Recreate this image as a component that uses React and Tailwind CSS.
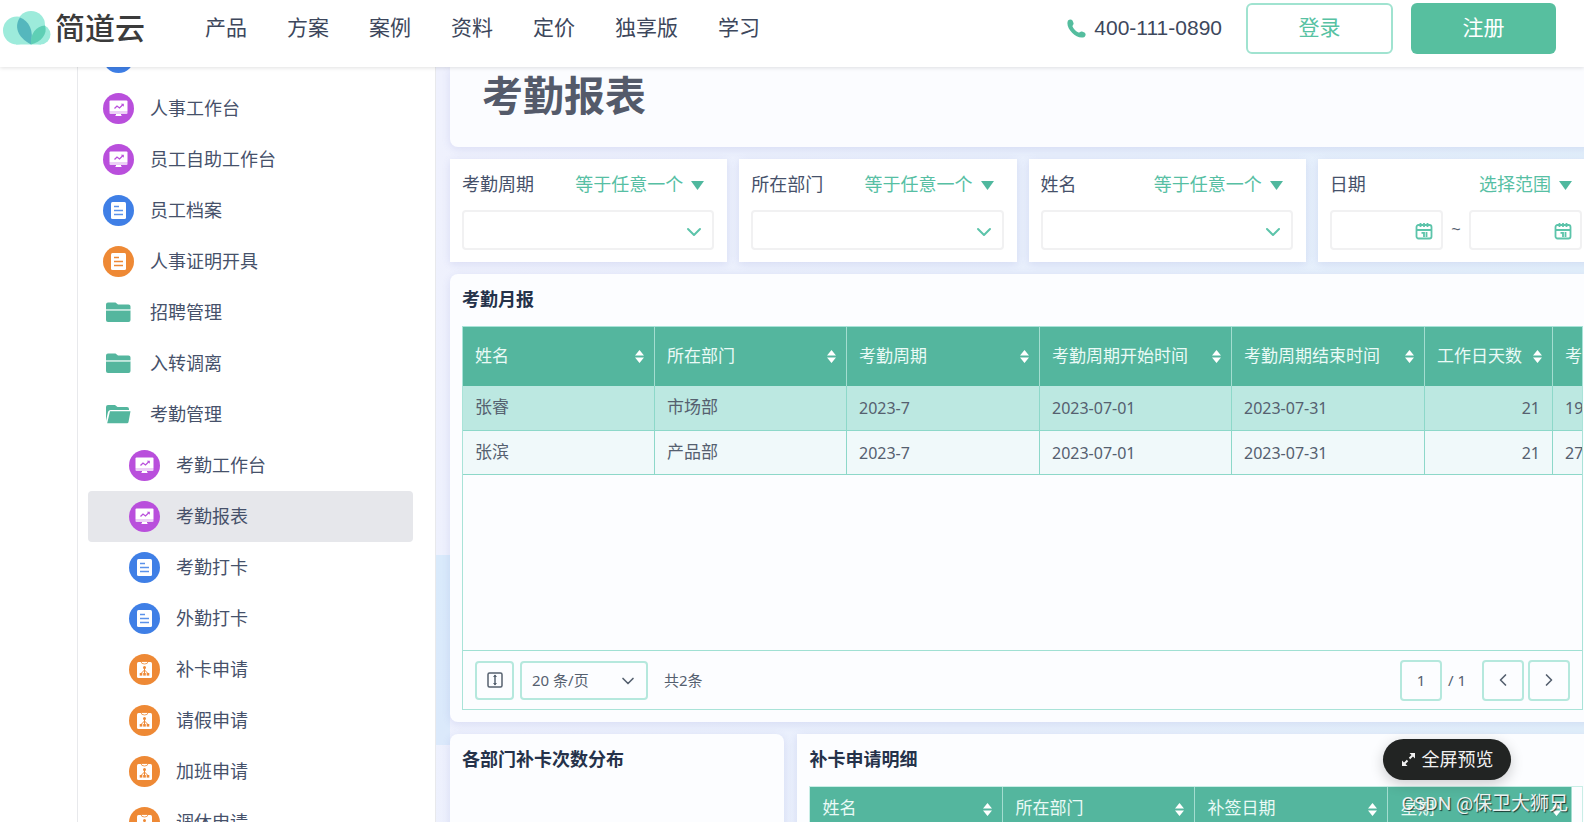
import React, { useState } from 'react';
import { ChevronDown, ChevronLeft, ChevronRight } from 'lucide-react';

// --- data ---
const NAV = ['产品', '方案', '案例', '资料', '定价', '独享版', '学习'];

const MENU = [
  { id: 0, name: '', icon: 'form', color: 'blue' },
  { id: 1, name: '人事工作台', icon: 'board', color: 'purple' },
  { id: 2, name: '员工自助工作台', icon: 'board', color: 'purple' },
  { id: 3, name: '员工档案', icon: 'form', color: 'blue' },
  { id: 4, name: '人事证明开具', icon: 'form', color: 'orange' },
  { id: 5, name: '招聘管理', icon: 'folder' },
  { id: 6, name: '入转调离', icon: 'folder' },
  { id: 7, name: '考勤管理', icon: 'folderOpen' },
  { id: 8, name: '考勤工作台', icon: 'board', color: 'purple', child: true },
  { id: 9, name: '考勤报表', icon: 'board', color: 'purple', child: true },
  { id: 10, name: '考勤打卡', icon: 'form', color: 'blue', child: true },
  { id: 11, name: '外勤打卡', icon: 'form', color: 'blue', child: true },
  { id: 12, name: '补卡申请', icon: 'flow', color: 'orange', child: true },
  { id: 13, name: '请假申请', icon: 'flow', color: 'orange', child: true },
  { id: 14, name: '加班申请', icon: 'flow', color: 'orange', child: true },
  { id: 15, name: '调休申请', icon: 'flow', color: 'orange', child: true },
];

const COLORS = {
  blue: 'bg-[#3f7fe6]',
  purple: 'bg-[#b94fdc]',
  orange: 'bg-[#ee8935]',
};

const MONTH_COLS = ['姓名', '所在部门', '考勤周期', '考勤周期开始时间', '考勤周期结束时间', '工作日天数', '考勤天数'];
const MONTH_ROWS = [
  ['张睿', '市场部', '2023-7', '2023-07-01', '2023-07-31', '21', '19'],
  ['张滨', '产品部', '2023-7', '2023-07-01', '2023-07-31', '21', '27'],
];
const DETAIL_COLS = ['姓名', '所在部门', '补签日期', '星期'];

// --- icons ---
const Logo = () => (
  <svg width="48" height="34" viewBox="0 0 48 34" aria-hidden="true">
    <g fill="#9debdb">
      <circle cx="14" cy="19.500" r="14" />
      <circle cx="28" cy="14" r="14" />
      <circle cx="37.500" cy="23.500" r="10" />
      <rect x="13" y="17" width="25" height="16.500" />
    </g>
    <path d="M28 33.500C14 26 11 15 17 6.500C26 10 31 19 28 33.500Z" fill="#55b7bd" />
    <path d="M28 33.500C27 23 33 15 42 14.500C45 23 38 31 28 33.500Z" fill="#5fcfb5" />
  </svg>
);

const BoardIcon = () => (
  <svg width="31" height="31" viewBox="0 0 31 31" aria-hidden="true">
    <path d="M7.500 7.500h16a1 1 0 0 1 1 1V18H6.500V8.500a1 1 0 0 1 1-1Z" fill="#fff" />
    <path d="M6.500 18h18v2a1 1 0 0 1-1 1h-16a1 1 0 0 1-1-1Z" fill="#ecd0f6" />
    <path d="M13 21h5v1.500h1V23h-7v-.5h1Z" fill="#fff" />
    <path d="m11.500 15.500 2.500-2.500 2.500 2 3.500-3.500" fill="none" stroke="#b94fdc" strokeWidth="1.3" />
    <path d="M17.800 10.800h3v3Z" fill="#b94fdc" />
  </svg>
);

const FormIcon = ({ color }) => (
  <svg width="31" height="31" viewBox="0 0 31 31" aria-hidden="true">
    <rect x="8" y="7" width="15" height="17" rx="1.500" fill="#fff" />
    <path d="M11 11.500h5M11 15.500h9M11 19.500h9" fill="none" stroke={color === 'blue' ? '#5b92ea' : '#ee8935'} strokeWidth="1.500" />
  </svg>
);

const FlowIcon = () => (
  <svg width="31" height="31" viewBox="0 0 31 31" aria-hidden="true">
    <rect x="8" y="8" width="15" height="16" rx="1.500" fill="#fff" />
    <path d="M12 7.500h7a3.500 2.500 0 0 1-7 0Z" fill="#fff" stroke="#ee8935" strokeWidth=".8" />
    <path d="M15.500 14v3M11.500 20l4-4 4 4M15.500 17v3" fill="none" stroke="#ee8935" strokeWidth="1" />
    <g fill="#ee8935">
      <circle cx="15.500" cy="13.500" r="1.500" />
      <rect x="10.700" y="19" width="2.600" height="2.600" />
      <rect x="14.200" y="19" width="2.600" height="2.600" />
      <rect x="17.700" y="19" width="2.600" height="2.600" />
    </g>
  </svg>
);

const FolderIcon = ({ open }) => (
  <svg width="31" height="31" viewBox="0 0 31 31" aria-hidden="true">
    {open ? (
      <g fill="#54b69e">
        <path d="M3 22V8a2 2 0 0 1 2-2h7l2.500 2H24a2 2 0 0 1 2 2v1H8a3 3 0 0 0-3 2Z" />
        <path d="M7 12.300h20.500L25.500 23a1.500 1.500 0 0 1-1.500 1.200H4.200Z" />
      </g>
    ) : (
      <g fill="#54b69e">
        <path d="M3 12V7.500a2 2 0 0 1 2-2h7.500L15 7.500h10.500a2 2 0 0 1 2 2V12Z" />
        <path d="M3 13.500h24.500V23a2 2 0 0 1-2 2H5a2 2 0 0 1-2-2Z" />
        <path d="M3 12h24.500v1.500H3Z" fill="#bfe6dc" />
      </g>
    )}
  </svg>
);

const CalendarIcon = () => (
  <svg width="18" height="18" viewBox="0 0 18 18" fill="none" stroke="#5cc4aa" strokeWidth="1.800" aria-hidden="true">
    <rect x="1.500" y="3" width="15" height="13.500" rx="2" />
    <path d="M1.500 8h15M5.500 1v4M9 1v4M12.500 1v4M6.500 10.800H9V15M11.500 10v5" />
  </svg>
);

const Caret = () => (
  <svg width="13" height="9" viewBox="0 0 13 9" fill="#4fb89e" aria-hidden="true">
    <path d="M0 0h13L6.500 9Z" />
  </svg>
);

const SortIcon = () => (
  <svg width="9" height="13" viewBox="0 0 9 13" fill="#fff" className="shrink-0" aria-hidden="true">
    <path d="M4.500 0 9 5.500H0ZM4.500 13 0 7.500h9Z" />
  </svg>
);

const MenuIcon = ({ item }) => {
  if (item.icon === 'folder') return <FolderIcon />;
  if (item.icon === 'folderOpen') return <FolderIcon open />;
  return (
    <span className={`size-[31px] shrink-0 rounded-full ${COLORS[item.color]}`}>
      {item.icon === 'board' && <BoardIcon />}
      {item.icon === 'form' && <FormIcon color={item.color} />}
      {item.icon === 'flow' && <FlowIcon />}
    </span>
  );
};

// --- header ---
const Header = () => (
  <header className="relative z-20 flex h-[67px] shrink-0 items-start bg-white pr-7 shadow-[0_1px_4px_rgba(0,0,0,0.12)]">
    <a href="#home" className="flex h-14 shrink-0 items-center gap-1 pl-[3px] text-[30px] font-bold text-[#3b3b3b]">
      <Logo />
      <span className="font-medium">简道云</span>
    </a>
    <nav className="ml-[60px] flex h-14 items-center gap-10 text-[21px] text-[#3d475c]">
      {NAV.map((n) => (
        <a key={n} href="#nav" className="whitespace-nowrap">{n}</a>
      ))}
    </nav>
    <div className="ml-auto flex h-14 items-center whitespace-nowrap">
      <a href="tel:4001110890" className="mr-6 flex items-center gap-2 text-[21px] text-[#3d475c]">
        <svg width="19" height="19" viewBox="0 0 19 19" fill="#54bd9e" aria-hidden="true">
          <path d="M1 1.500C2.500 0 4.500 0 5.500 1.500L6.500 4C7 5.500 5.500 6 5.500 7.500C6.500 10 9 12.500 11.500 13.500C13 13.500 13.500 12 15 12.500L17.500 13.500C19 14.500 19 16.500 17.500 18C10 21.500-2.500 9 1 1.500Z" />
        </svg>
        400-111-0890
      </a>
      <button className="h-[51px] w-[147px] rounded-md border-2 border-[#a0e3d0] text-[21px] text-[#57c2a3]">登录</button>
      <button className="ml-[18px] h-[51px] w-[145px] rounded-md bg-[#57bf9f] text-[21px] text-white">注册</button>
    </div>
  </header>
);

// --- sidebar ---
const Sidebar = ({ active, onSelect }) => (
  <aside className="ml-[77px] w-[359px] shrink-0 border-x border-[#e8e9ec] bg-white">
    <ul className="-mt-[35px] pl-2.5 pr-[22px]">
      {MENU.map((item) => (
        <li key={item.id}>
          <button
            onClick={() => onSelect(item.id)}
            className={`flex h-[51px] w-full items-center gap-4 rounded text-lg text-[#46516a] ${item.child ? 'pl-[41px]' : 'pl-[15px]'} ${active === item.id ? 'bg-[#e6e7eb]' : ''}`}
          >
            <MenuIcon item={item} />
            {item.name}
          </button>
        </li>
      ))}
    </ul>
  </aside>
);

// --- filters ---
const FilterCard = ({ id, label, mode, children }) => (
  <div className="bg-white py-3 pl-3 pr-[13px] shadow-[0_2px_8px_rgba(90,100,190,0.14)]">
    <div className="flex h-7 items-center justify-between pr-2.5 text-lg">
      <label htmlFor={id} className="text-[#46516a]">{label}</label>
      <button className="flex items-center gap-2 text-[#57bfa4]">
        {mode}
        <Caret />
      </button>
    </div>
    <div className="mt-[11px] flex items-center">{children}</div>
  </div>
);

const SelectFilter = ({ id, label }) => (
  <FilterCard id={id} label={label} mode="等于任意一个">
    <div className="relative w-full">
      <select id={id} className="block h-10 w-full appearance-none rounded border-2 border-[#f1f1f2] bg-white px-3">
        <option value=""></option>
      </select>
      <ChevronDown size={24} strokeWidth={2} className="pointer-events-none absolute right-2 top-2.5 text-[#5cc4aa]" />
    </div>
  </FilterCard>
);

const DateInput = ({ id, label }) => (
  <div className="relative min-w-0 flex-1">
    <input id={id} aria-label={label} type="text" className="block h-10 w-full rounded border-2 border-[#f1f1f2] bg-white px-2" />
    <span className="pointer-events-none absolute right-2.5 top-3"><CalendarIcon /></span>
  </div>
);

// --- tables ---
const HeadCell = ({ children }) => (
  <th className="border-r border-[#a3ddd0] bg-[#54b69e] pl-3 pr-2.5 text-left font-normal">
    <div className="flex items-center justify-between whitespace-nowrap text-[17px] text-[#eafaf6]">
      {children}
      <SortIcon />
    </div>
  </th>
);

const MonthReport = () => (
  <section className="flex h-[448px] flex-col rounded-lg bg-[#fcfdff] px-3 pb-3 shadow-[0_2px_8px_rgba(90,100,190,0.14)]">
    <h2 className="flex h-[52px] items-center text-lg font-bold text-[#25324a]">考勤月报</h2>
    <div className="flex min-h-0 flex-1 flex-col border border-[#a9e3d8]">
      <div className="flex-1 overflow-hidden">
        <table className="w-[1282px] table-fixed border-separate border-spacing-0">
          <colgroup>
            <col className="w-48" />
            <col className="w-48" />
            <col className="w-[193px]" />
            <col className="w-48" />
            <col className="w-[193px]" />
            <col className="w-32" />
            <col className="w-48" />
          </colgroup>
          <thead>
            <tr className="h-[59px]">
              {MONTH_COLS.map((c) => (
                <HeadCell key={c}>{c}</HeadCell>
              ))}
            </tr>
          </thead>
          <tbody>
            {MONTH_ROWS.map((row, r) => (
              <tr key={row[0]} className={r === 0 ? 'h-[45px] bg-[#bce8e1]' : 'h-11 bg-[#f0f9fa]'}>
                {row.map((v, i) => (
                  <td
                    key={i}
                    className={`border-b border-r border-[#8dd8c9] px-3 text-[#55606f] ${i < 2 ? 'text-[17px]' : 'font-["Noto_Sans",sans-serif] text-base'} ${i === 5 ? 'text-right' : ''}`}
                  >
                    {v}
                  </td>
                ))}
              </tr>
            ))}
          </tbody>
        </table>
      </div>
      <div className='flex h-[59px] items-center border-t border-[#a0e0d3] px-3 font-["Noto_Sans","Noto_Sans_CJK_SC",sans-serif] text-[15px] text-[#55606f]'>
        <button aria-label="行高" className="flex h-[39px] w-[39px] items-center justify-center rounded border-2 border-[#b5e8dd]">
          <svg width="16" height="16" viewBox="0 0 16 16" fill="none" stroke="#55606f" strokeWidth="1.500" aria-hidden="true">
            <rect x="1" y="1" width="14" height="14" rx="1.500" />
            <path d="M8 3v10" />
            <path d="m6 5 2-2.500L10 5ZM6 11l2 2.500L10 11Z" fill="#55606f" stroke="none" />
          </svg>
        </button>
        <div className="relative ml-1.5">
          <select aria-label="每页条数" className="block h-[39px] w-32 appearance-none rounded border-2 border-[#b5e8dd] bg-transparent pl-2.5">
            <option>20 条/页</option>
          </select>
          <ChevronDown size={20} className="pointer-events-none absolute right-2.5 top-2.5" />
        </div>
        <span className="ml-4">共2条</span>
        <div className="ml-auto flex items-center">
          <input aria-label="页码" defaultValue="1" className="h-[41px] w-[42px] rounded border-2 border-[#b5e8dd] text-center" />
          <span className="ml-1.5 mr-4 whitespace-nowrap">/ 1</span>
          <button aria-label="上一页" className="flex h-[41px] w-[42px] items-center justify-center rounded border-2 border-[#b5e8dd]">
            <ChevronLeft size={20} />
          </button>
          <button aria-label="下一页" className="ml-1 flex h-[41px] w-[42px] items-center justify-center rounded border-2 border-[#b5e8dd]">
            <ChevronRight size={20} />
          </button>
        </div>
      </div>
    </div>
  </section>
);

const DetailReport = () => (
  <section className="min-w-0 bg-[#fcfdff] px-3 shadow-[0_2px_8px_rgba(90,100,190,0.14)]">
    <h2 className="flex h-[52px] items-center text-lg font-bold text-[#25324a]">补卡申请明细</h2>
    <div className="h-40 overflow-hidden border border-[#c9eee6] pr-2.5">
      <table className="w-full table-fixed border-separate border-spacing-0">
        <colgroup>
          <col className="w-[193px]" />
          <col className="w-48" />
          <col className="w-[193px]" />
          <col />
        </colgroup>
        <thead>
          <tr className="h-11">
            {DETAIL_COLS.map((c) => (
              <HeadCell key={c}>{c}</HeadCell>
            ))}
          </tr>
        </thead>
      </table>
    </div>
  </section>
);

// --- app ---
const App = () => {
  const [active, setActive] = useState(9);

  return (
    <div className='relative flex h-screen flex-col overflow-hidden bg-white font-["Liberation_Sans","Noto_Sans_CJK_SC",sans-serif]'>
      <Header />
      <div className="flex min-h-0 flex-1 overflow-hidden">
        <Sidebar active={active} onSelect={setActive} />
        <main className="min-w-0 flex-1 overflow-hidden pl-3.5 [background:linear-gradient(#d9eafb,#dbe9fb)_0_488px/14px_190px_no-repeat,linear-gradient(100deg,#eff1fd_0%,#e8effc_50%,#e2f0fb_100%)]">
          {/* the board is a little wider than the window, its last column runs off the edge */}
          <div className="-mr-[11px] flex flex-col gap-3">
            <div className="flex h-20 items-start rounded-b-lg bg-[#fbfcff] pl-8 shadow-[0_2px_8px_rgba(90,100,190,0.14)]">
              <h1 className="text-[41px] leading-[60px] font-bold text-[#545a6a]">考勤报表</h1>
            </div>
            <div className="grid grid-cols-4 gap-3">
              <SelectFilter id="period" label="考勤周期" />
              <SelectFilter id="dept" label="所在部门" />
              <SelectFilter id="name" label="姓名" />
              <FilterCard id="from" label="日期" mode="选择范围">
                <DateInput id="from" label="开始日期" />
                <span className="w-[26px] text-center text-[#55606f]">~</span>
                <DateInput id="to" label="结束日期" />
              </FilterCard>
            </div>
            <MonthReport />
            <div className="grid grid-cols-[335fr_799fr] gap-[13px]">
              <section className="rounded-lg bg-[#fcfdff] px-3 shadow-[0_2px_8px_rgba(90,100,190,0.14)]">
                <h2 className="flex h-[52px] items-center text-lg font-bold text-[#25324a]">各部门补卡次数分布</h2>
              </section>
              <DetailReport />
            </div>
          </div>
        </main>
      </div>

      <button className="absolute bottom-[42px] right-[73px] z-30 flex h-[41px] w-32 items-center justify-center gap-1.5 rounded-full bg-[#222423] text-lg text-[#f1f1f1] shadow-[0_4px_14px_rgba(0,0,0,0.2)]">
        <svg width="15" height="15" viewBox="0 0 15 15" fill="#f1f1f1" aria-hidden="true">
          <path d="M8.500 1H14v5.500ZM1 8.500V14h5.500Z" />
          <path d="m8.500 6.500 3-3M3.500 11.500l3-3" stroke="#f1f1f1" strokeWidth="2" />
        </svg>
        全屏预览
      </button>
      <span className='absolute bottom-1 right-4 z-30 whitespace-nowrap font-[Roboto,"Noto_Sans_CJK_SC",sans-serif] text-[19px] text-white/90 [text-shadow:1px_1px_1px_rgba(0,0,0,0.7)]'>
        CSDN @保卫大狮兄
      </span>
    </div>
  );
};

export default App;
